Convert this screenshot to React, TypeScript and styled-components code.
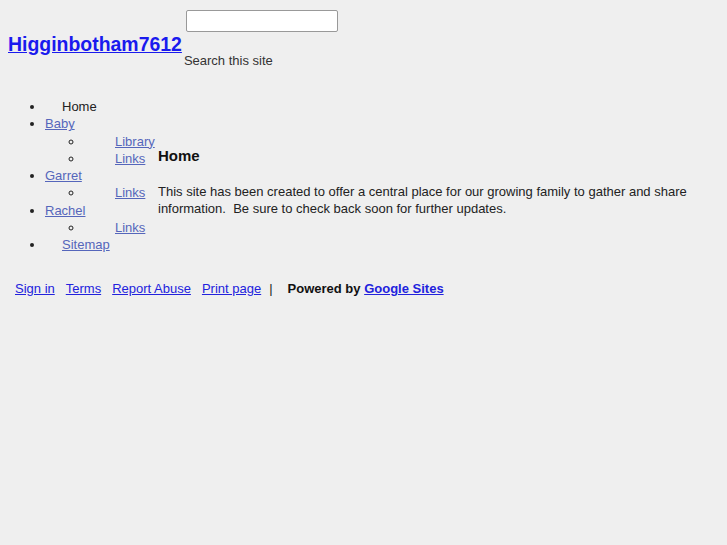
import React from "react";
import styled, { createGlobalStyle } from "styled-components";

const Global = createGlobalStyle`
  html, body { background: #efefef; }
  body {
    margin: 8px;
    font-family: "Liberation Sans", Arial, sans-serif;
    font-size: 13px;
    color: #222;
  }
`;

const Header = styled.div`
  display: flex;
  align-items: flex-start;
`;

const TitleCell = styled.div`
  padding-top: 25px;
`;

const Title = styled.a`
  font-size: 19.45px;
  font-weight: bold;
  color: #1a1aee;
  text-decoration: underline;
`;

const SearchCell = styled.div`
  display: flex;
  flex-direction: column;
  align-items: flex-start;
  padding-left: 2px;
`;

const SearchInput = styled.input`
  width: 152px;
  height: 22px;
  box-sizing: border-box;
  margin: 2px 0 0 2px;
  border: 1px solid #999;
  border-radius: 2px;
  background: #fff;
`;

const SearchLabel = styled.div`
  margin-top: 21px;
  color: #333;
  font-size: 13px;
`;

const Body = styled.div`
  display: flex;
  margin-top: 30px;
`;

const Nav = styled.ul`
  width: 113px;
  flex: none;
  margin: 0;
  padding-left: 37px;
  line-height: 17.3px;
  list-style: disc;
`;

const SubList = styled.ul`
  margin: 0;
  padding-left: 39px;
  list-style: circle;
`;

const Item = styled.li``;

const NavLink = styled.a<{ $indent?: number }>`
  color: #5566bb;
  text-decoration: underline;
  margin-left: ${(p) => p.$indent ?? 0}px;
  white-space: nowrap;
`;

const Current = styled.span`
  margin-left: 17px;
  color: #222;
`;

const Main = styled.div`
  margin-top: 49px;
  margin-left: 0;
`;

const Heading = styled.h3`
  margin: 0;
  font-size: 15px;
  font-weight: bold;
  color: #111;
  line-height: 18px;
`;

const Para = styled.p`
  margin: 18px 0 0;
  line-height: 17px;
  width: 540px;
`;

const Footer = styled.div`
  margin-top: 27px;
  padding-left: 7px;
  display: flex;
  align-items: baseline;
  white-space: pre;
`;

const FootLink = styled.a`
  color: #2222dd;
  text-decoration: underline;
  margin-right: 11px;
`;

const Sep = styled.span`
  color: #222;
  margin-left: -3px;
  margin-right: 15px;
`;

const Powered = styled.span`
  font-weight: bold;
  color: #111;
`;

const PoweredLink = styled.a`
  color: #2222dd;
  text-decoration: underline;
  font-weight: bold;
`;

export default function App() {
  return (
    <>
      <Global />
      <Header>
        <TitleCell>
          <Title href="#">Higginbotham7612</Title>
        </TitleCell>
        <SearchCell>
          <SearchInput type="text" />
          <SearchLabel>Search this site</SearchLabel>
        </SearchCell>
      </Header>
      <Body>
        <Nav>
          <Item>
            <Current>Home</Current>
          </Item>
          <Item>
            <NavLink href="#">Baby</NavLink>
            <SubList>
              <Item>
                <NavLink href="#" $indent={31}>Library</NavLink>
              </Item>
              <Item>
                <NavLink href="#" $indent={31}>Links</NavLink>
              </Item>
            </SubList>
          </Item>
          <Item>
            <NavLink href="#">Garret</NavLink>
            <SubList>
              <Item>
                <NavLink href="#" $indent={31}>Links</NavLink>
              </Item>
            </SubList>
          </Item>
          <Item>
            <NavLink href="#">Rachel</NavLink>
            <SubList>
              <Item>
                <NavLink href="#" $indent={31}>Links</NavLink>
              </Item>
            </SubList>
          </Item>
          <Item>
            <NavLink href="#" $indent={17}>Sitemap</NavLink>
          </Item>
        </Nav>
        <Main>
          <Heading>Home</Heading>
          <Para>
            This site has been created to offer a central place for our growing family to gather and share information.{"\u00a0 "}Be sure to check back soon for further updates.
          </Para>
        </Main>
      </Body>
      <Footer>
        <FootLink href="#">Sign in</FootLink>
        <FootLink href="#">Terms</FootLink>
        <FootLink href="#">Report Abuse</FootLink>
        <FootLink href="#">Print page</FootLink>
        <Sep>|</Sep>
        <Powered>Powered by </Powered>
        <PoweredLink href="#">Google Sites</PoweredLink>
      </Footer>
    </>
  );
}
